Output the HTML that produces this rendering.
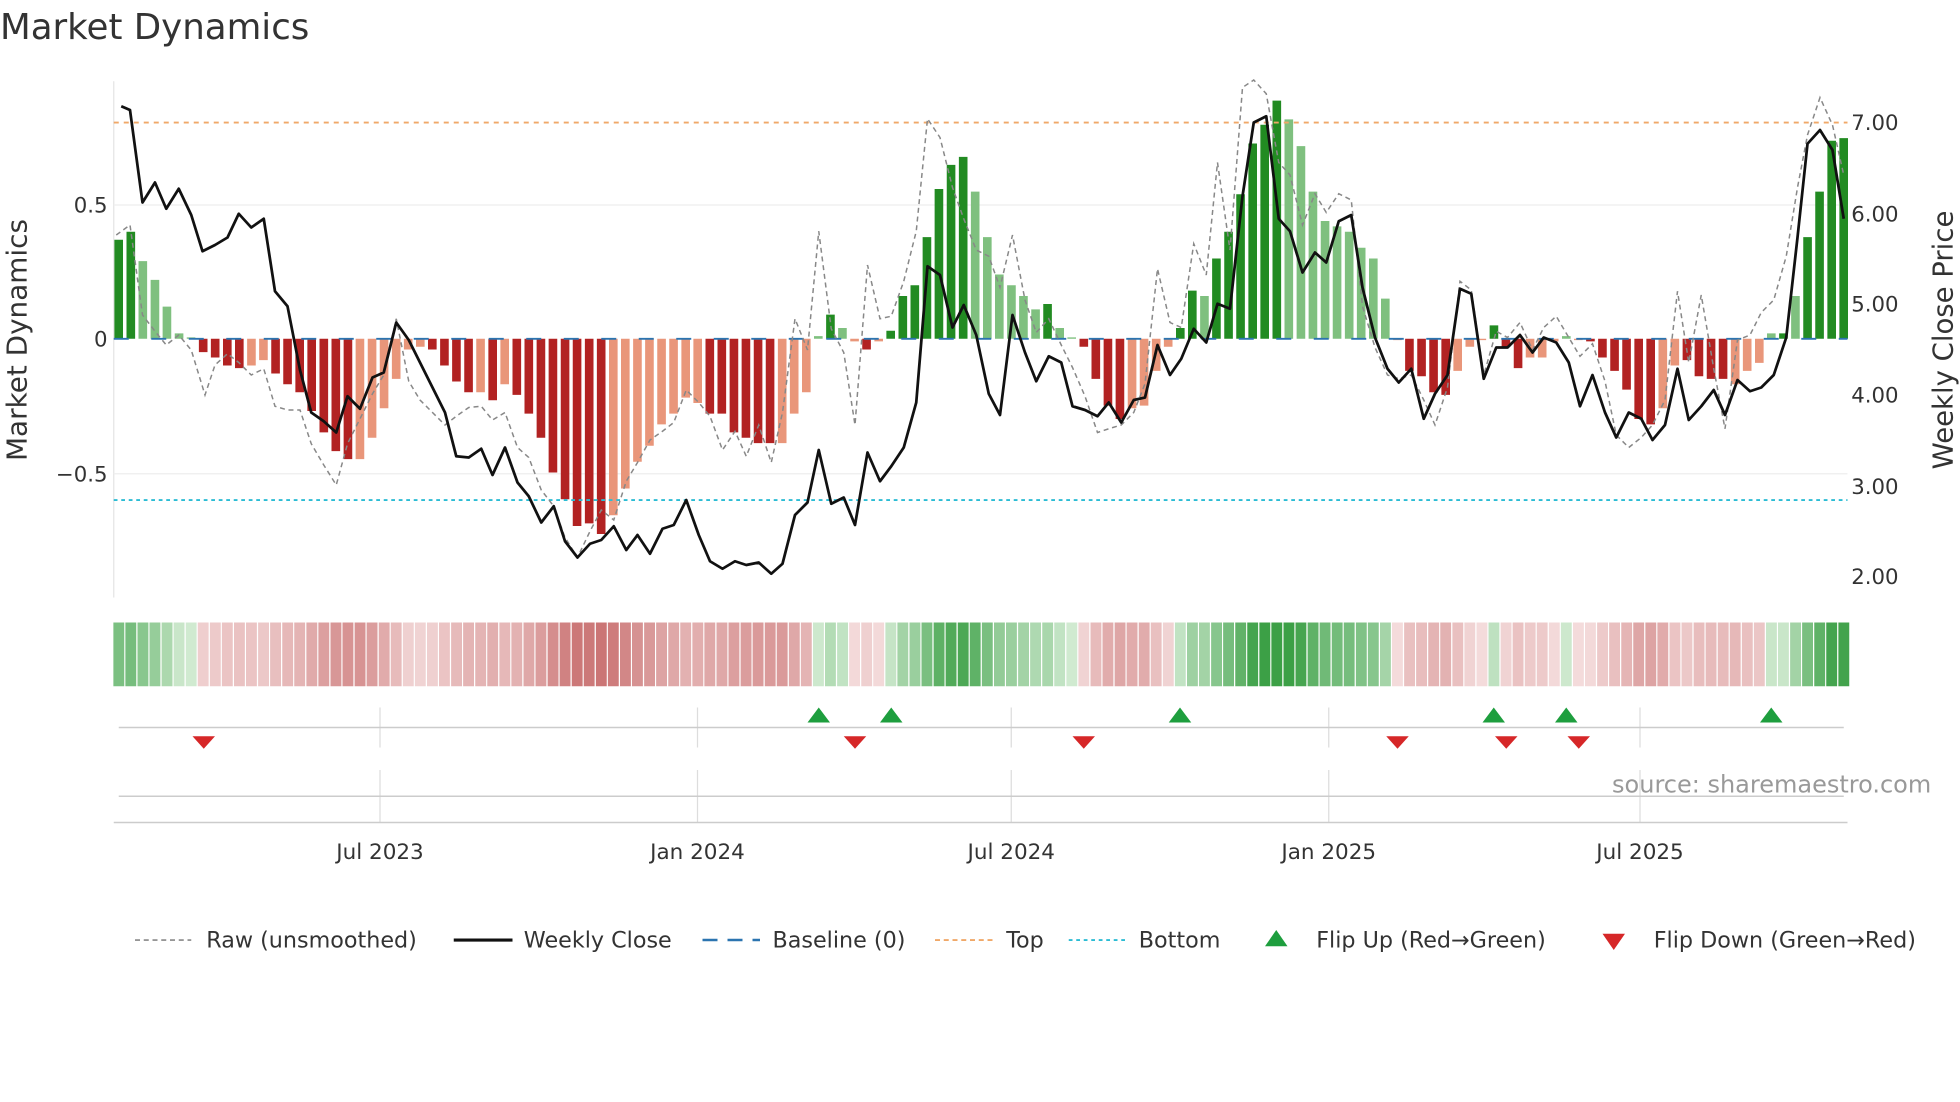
<!DOCTYPE html>
<html><head><meta charset="utf-8"><style>
html,body{margin:0;padding:0;background:#fff;}
svg{display:block;font-family:"DejaVu Sans","Liberation Sans",sans-serif;}
</style></head><body>
<svg id="s" width="1960" height="1102" viewBox="0 0 1568 881.6" xmlns="http://www.w3.org/2000/svg">
<rect width="1568" height="882" fill="#fff"/>
<text x="0" y="31" font-size="28.5" fill="#333">Market Dynamics</text>
<line x1="91" y1="65" x2="91" y2="478" stroke="#e4e4e4" stroke-width="1"/>
<line x1="91" y1="164" x2="1478" y2="164" stroke="#eeeeee" stroke-width="1"/>
<line x1="91" y1="379" x2="1478" y2="379" stroke="#eeeeee" stroke-width="1"/>
<g id="bars"></g>
<g id="heat"></g>
<line x1="91" y1="98" x2="1478" y2="98" stroke="#f0a868" stroke-width="1.5" stroke-dasharray="4,4"/>
<line x1="91" y1="400" x2="1478" y2="400" stroke="#2bbcd4" stroke-width="1.5" stroke-dasharray="3,3"/>
<line x1="91" y1="271" x2="1478" y2="271" stroke="#2b74b0" stroke-width="1.5" stroke-dasharray="12,18"/>
<polyline id="raw" fill="none" stroke="#888" stroke-width="1.2" stroke-dasharray="4,3"/>
<polyline id="close" fill="none" stroke="#111" stroke-width="2.2" stroke-linejoin="round"/>
<g font-size="17" fill="#333">
<text x="86" y="170" text-anchor="end">0.5</text>
<text x="86" y="277" text-anchor="end">0</text>
<text x="86" y="385" text-anchor="end">−0.5</text>
<text x="1481" y="104">7.00</text>
<text x="1481" y="177">6.00</text>
<text x="1481" y="249">5.00</text>
<text x="1481" y="322">4.00</text>
<text x="1481" y="395">3.00</text>
<text x="1481" y="467">2.00</text>
<text transform="translate(21,272) rotate(-90)" text-anchor="middle" font-size="22.3">Market Dynamics</text>
<text transform="translate(1562,272) rotate(-90)" text-anchor="middle" font-size="22">Weekly Close Price</text>
</g>
<g stroke="#ddd" stroke-width="1">
<line x1="304" y1="566" x2="304" y2="598"/><line x1="558" y1="566" x2="558" y2="598"/><line x1="809" y1="566" x2="809" y2="598"/><line x1="1063" y1="566" x2="1063" y2="598"/><line x1="1312" y1="566" x2="1312" y2="598"/>
<line x1="304" y1="616" x2="304" y2="658"/><line x1="558" y1="616" x2="558" y2="658"/><line x1="809" y1="616" x2="809" y2="658"/><line x1="1063" y1="616" x2="1063" y2="658"/><line x1="1312" y1="616" x2="1312" y2="658"/>
</g>
<line x1="95" y1="582" x2="1475" y2="582" stroke="#ccc" stroke-width="1.2"/>
<line x1="95" y1="637" x2="1475" y2="637" stroke="#ccc" stroke-width="1.2"/>
<line x1="91" y1="658" x2="1478" y2="658" stroke="#ccc" stroke-width="1.2"/>
<g id="tri"></g>
<text x="1545" y="634" text-anchor="end" font-size="19.2" fill="#999">source: sharemaestro.com</text>
<g font-size="17.2" fill="#333" text-anchor="middle">
<text x="304" y="687">Jul 2023</text><text x="558" y="687">Jan 2024</text><text x="809" y="687">Jul 2024</text><text x="1063" y="687">Jan 2025</text><text x="1312" y="687">Jul 2025</text>
</g>
<g font-size="17.8" fill="#333">
<line x1="108" y1="752" x2="153" y2="752" stroke="#888" stroke-width="1.3" stroke-dasharray="4,3"/>
<text x="165" y="758">Raw (unsmoothed)</text>
<line x1="363" y1="752" x2="410" y2="752" stroke="#111" stroke-width="2.5"/>
<text x="419" y="758">Weekly Close</text>
<line x1="562" y1="752" x2="608" y2="752" stroke="#2b74b0" stroke-width="2" stroke-dasharray="12,8"/>
<text x="618" y="758">Baseline (0)</text>
<line x1="748" y1="752" x2="794" y2="752" stroke="#f0a868" stroke-width="1.5" stroke-dasharray="4,3"/>
<text x="805" y="758">Top</text>
<line x1="855" y1="752" x2="901" y2="752" stroke="#2bbcd4" stroke-width="1.5" stroke-dasharray="3,3"/>
<text x="911" y="758">Bottom</text>
<polygon points="1012,757 1030,757 1021,744" fill="#1e9e3e"/>
<text x="1053" y="758">Flip Up (Red→Green)</text>
<polygon points="1282,747 1300,747 1291,760" fill="#d62728"/>
<text x="1323" y="758">Flip Down (Green→Red)</text>
</g>
</svg>
<script>
var d="DG.37 DG.40 LG.29 LG.22 LG.12 LG.02 LG.005 DR-.05 DR-.07 DR-.10 DR-.11 LR-.10 LR-.08 DR-.13 DR-.17 DR-.20 DR-.27 DR-.35 DR-.42 DR-.45 LR-.45 LR-.37 LR-.26 LR-.15 LR-.04 LR-.03 DR-.04 DR-.10 DR-.16 DR-.20 LR-.20 DR-.23 LR-.17 DR-.21 DR-.28 DR-.37 DR-.50 DR-.60 DR-.70 DR-.69 DR-.73 LR-.66 LR-.56 LR-.46 LR-.40 LR-.32 LR-.28 LR-.22 LR-.24 DR-.28 DR-.28 DR-.35 DR-.37 DR-.39 DR-.39 LR-.39 LR-.28 LR-.20 LG.01 DG.09 LG.04 LR-.01 DR-.04 LR-.01 DG.03 DG.16 DG.20 DG.38 DG.56 DG.65 DG.68 LG.55 LG.38 LG.24 LG.20 LG.16 LG.11 DG.13 LG.04 LG.005 DR-.03 DR-.15 DR-.25 DR-.30 LR-.26 LR-.25 LR-.12 LR-.03 DG.04 DG.18 LG.16 DG.30 DG.40 DG.54 DG.73 DG.80 DG.89 LG.82 LG.72 LG.55 LG.44 LG.42 LG.40 LG.34 LG.30 LG.15 LR-.005 DR-.12 DR-.14 DR-.20 DR-.21 LR-.12 LR-.03 LR-.005 DG.05 DR-.03 DR-.11 LR-.07 LR-.07 LR-.01 LG.01 LR-.005 DR-.01 DR-.07 DR-.12 DR-.19 DR-.30 DR-.32 LR-.26 LR-.10 DR-.08 DR-.14 DR-.15 DR-.15 LR-.17 LR-.12 LR-.09 LG.02 DG.02 LG.16 DG.38 DG.55 DG.74 DG.75".split(" ");
var n=d.length,x0=95,x1=1475,st=(x1-x0)/(n-1),bw=st*0.72,b="",h="";
var col={DG:"#228b22",LG:"#7fc07f",DR:"#b22222",LR:"#e9967a"};
function mix(a,c,t){var r="#";for(var i=0;i<3;i++){var v=Math.round(a[i]+(c[i]-a[i])*t);r+=("0"+v.toString(16)).slice(-2);}return r;}
for(var i=0;i<n;i++){var k=d[i].slice(0,2),v=parseFloat(d[i].slice(2));var x=x0+i*st;var y=271-v*214;
b+='<rect x="'+(x-bw/2).toFixed(1)+'" y="'+Math.min(y,271).toFixed(1)+'" width="'+bw.toFixed(1)+'" height="'+Math.abs(y-271).toFixed(1)+'" fill="'+col[k]+'"/>';
var t=Math.min(1,Math.abs(v)/0.8);var c=v>=0?mix([212,236,212],[60,160,70],Math.pow(t,0.7)):mix([245,222,222],[200,110,110],Math.pow(t,0.7));
h+='<rect x="'+(x-st/2+0.5).toFixed(1)+'" y="498" width="'+(st-1).toFixed(1)+'" height="51" fill="'+c+'"/>';}
document.getElementById("bars").innerHTML=b;document.getElementById("heat").innerHTML=h;
var tr="";[655,713,944,1195,1253,1417].forEach(function(x){tr+='<polygon points="'+(x-9)+',578 '+(x+9)+',578 '+x+',566" fill="#1e9e3e"/>';});
[163,684,867,1118,1205,1263].forEach(function(x){tr+='<polygon points="'+(x-9)+',589 '+(x+9)+',589 '+x+',599" fill="#d62728"/>';});
document.getElementById("tri").innerHTML=tr;
document.getElementById("close").setAttribute("points","97,85 104,88 114,162 124,146 133,167 143,151 153,172 162,201 172,196 182,190 191,171 201,182 211,175 220,233 230,245 240,296 249,330 259,337 269,346 278,317 288,327 298,302 307,298 317,258 327,272 336,290 346,310 356,330 365,365 375,366 385,359 394,380 404,358 414,386 423,397 433,418 443,405 452,433 462,446 472,435 481,432 491,421 501,440 510,428 520,443 530,423 539,420 549,400 559,428 568,449 578,455 588,449 597,452 607,450 617,459 626,451 636,412 646,402 655,360 665,403 675,398 684,420 694,362 704,385 713,373 723,358 733,322 742,213 752,220 762,262 771,244 781,268 791,315 800,332 810,252 820,282 829,305 839,285 849,290 858,325 868,328 878,333 887,322 897,338 907,320 916,318 926,276 936,300 945,287 955,263 965,274 974,243 984,247 994,157 1003,98 1013,93 1023,175 1032,185 1042,218 1052,202 1061,210 1071,177 1081,172 1090,230 1100,270 1110,295 1119,306 1129,295 1139,335 1148,315 1158,300 1168,231 1177,235 1187,303 1197,278 1206,278 1216,268 1226,282 1235,270 1245,274 1255,290 1264,325 1274,300 1284,330 1293,350 1303,330 1313,335 1322,352 1332,340 1342,295 1351,336 1361,325 1371,312 1380,332 1390,304 1400,313 1409,310 1419,300 1429,270 1438,190 1446,115 1456,104 1466,120 1475,175");
document.getElementById("raw").setAttribute("points","93,188 104,180 114,252 124,265 133,276 143,268 153,280 164,316 172,292 182,283 191,290 201,300 211,295 220,325 230,328 240,328 249,355 259,372 269,388 278,355 288,335 298,315 307,300 317,255 327,305 336,320 346,330 356,340 365,333 375,326 385,325 394,336 404,330 414,358 423,366 433,392 443,405 452,430 462,446 472,425 481,408 491,416 501,385 510,370 520,352 530,345 539,338 549,312 559,322 568,333 578,360 588,345 597,365 607,340 617,370 626,330 636,255 646,280 655,185 665,263 675,282 684,340 694,212 704,255 713,253 723,225 733,185 742,95 752,110 762,150 771,175 781,200 791,205 800,230 810,188 820,240 829,266 839,255 849,276 858,294 868,317 878,346 887,343 897,340 907,330 916,307 926,215 936,258 945,262 955,195 965,220 974,130 984,200 994,70 1003,64 1013,75 1023,130 1032,140 1042,180 1052,155 1061,170 1071,155 1081,160 1090,245 1100,278 1110,300 1119,303 1129,300 1139,320 1148,340 1158,310 1168,225 1177,232 1187,300 1197,265 1206,270 1216,258 1226,280 1235,262 1245,253 1255,270 1264,285 1274,275 1284,305 1293,348 1303,358 1313,350 1322,340 1332,320 1342,233 1351,290 1361,236 1371,295 1380,343 1390,272 1400,268 1409,250 1419,240 1429,205 1438,150 1446,108 1456,78 1466,100 1475,140");
</script>
</body></html>
